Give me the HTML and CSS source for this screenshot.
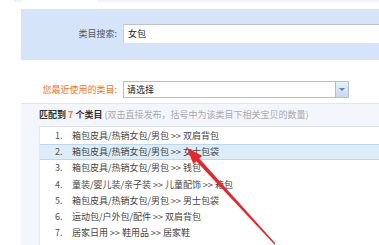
FILE: index.html
```html
<!DOCTYPE html>
<html>
<head>
<meta charset="utf-8">
<link rel="stylesheet" href="styles.css">
</head>
<body>
<div class="page">
  <div class="topstrip"><span class="ts-a"></span><span class="ts-b"></span></div>
  <div class="search-panel">
    <div class="row">
      <label class="label">类目搜索:</label>
      <div class="input">女包</div>
    </div>
  </div>
  <div class="recent">
    <label class="label orange">您最近使用的类目:</label>
    <div class="select"><span class="sel-text">请选择</span><span class="sel-btn"><span class="tri"></span></span></div>
  </div>
  <div class="results">
    <div class="res-head"><b>匹配到 <span class="num">7</span> 个类目</b> <span class="hint">(双击直接发布，括号中为该类目下相关宝贝的数量)</span></div>
    <ul class="list">
      <li><span class="no">1.</span>箱包皮具/热销女包/男包 &gt;&gt; 双肩背包</li>
      <li class="active"><span class="no">2.</span>箱包皮具/热销女包/男包 &gt;&gt; 女士包袋</li>
      <li><span class="no">3.</span>箱包皮具/热销女包/男包 &gt;&gt; 钱包</li>
      <li><span class="no">4.</span>童装/婴儿装/亲子装 &gt;&gt; 儿童配饰 &gt;&gt; 箱包</li>
      <li><span class="no">5.</span>箱包皮具/热销女包/男包 &gt;&gt; 男士包袋</li>
      <li><span class="no">6.</span>运动包/户外包/配件 &gt;&gt; 双肩背包</li>
      <li><span class="no">7.</span>居家日用 &gt;&gt; 鞋用品 &gt;&gt; 居家鞋</li>
    </ul>
  </div>
  <svg class="arrow" width="379" height="245" viewBox="0 0 379 245">
    <polygon points="187,148 202.2,155.7 199.3,158.4 275.5,243.5 274.5,244.5 196.3,161.2 193.4,163.9" fill="#e8262a"/>
  </svg>
</div>
</body>
</html>
```
FILE: styles.css
```css
html, body {
  margin: 0;
  padding: 0;
  background: #fff;
}
.page {
  position: relative;
  width: 379px;
  height: 245px;
  overflow: hidden;
  font-family: "Noto Sans CJK SC", "Noto Sans", sans-serif;
  font-size: 9px;
  color: #333;
}
.topstrip {
  height: 2px;
  display: flex;
}
.ts-a {
  margin-left: 14px;
  width: 7px;
  background: #eef3fb;
}
.ts-b {
  margin-left: 76px;
  flex: 1;
  background: #f1f5fb;
}
.search-panel {
  margin: 7px 0 0 21px;
  height: 51px;
  background: #d6e4f9;
  box-sizing: border-box;
  padding-top: 15px;
}
.row {
  display: flex;
  align-items: center;
}
.label {
  width: 96px;
  text-align: right;
  margin-right: 6px;
  color: #555;
  line-height: 19px;
}
.input {
  flex: 1;
  height: 19px;
  box-sizing: border-box;
  background: #fff;
  border-top: 1px solid #b9c2cf;
  border-left: 1px solid #c7cfd9;
  padding-left: 4px;
  line-height: 18px;
  color: #222;
}
.recent {
  display: flex;
  align-items: center;
  padding: 15px 0 0 21px;
  height: 43px;
  box-sizing: border-box;
}
.orange {
  color: #f0742a;
}
.select {
  width: 226px;
  height: 17px;
  box-sizing: border-box;
  border: 1px solid #a9c1de;
  background: #fff;
  display: flex;
  align-items: center;
}
.sel-text {
  flex: 1;
  padding-left: 3px;
  color: #222;
  line-height: 15px;
}
.sel-btn {
  width: 13px;
  height: 15px;
  box-sizing: border-box;
  border-left: 1px solid #a9c1de;
  background: linear-gradient(#e8eff8, #c9d8ea);
  display: flex;
  align-items: center;
  justify-content: center;
}
.tri {
  width: 0;
  height: 0;
  border-left: 3px solid transparent;
  border-right: 3px solid transparent;
  border-top: 3px solid #5b82b3;
}
.results {
  margin-left: 21px;
  height: 142px;
  background: #f3f6fc;
  border-top: 1px solid #dde7f4;
  box-sizing: border-box;
  padding: 3px 0 0 18px;
}
.res-head {
  height: 19px;
  line-height: 16px;
  color: #333;
}
.res-head b {
  font-weight: bold;
}
.num {
  color: #f0742a;
}
.hint {
  color: #aaa;
}
.list {
  list-style: none;
  margin: 0;
  padding: 1px 0 0 0;
  background: #fff;
  border-top: 1px solid #dbe4ef;
  border-left: 1px solid #e3eaf3;
  height: 130px;
}
.list li {
  height: 16.2px;
  line-height: 16.2px;
  padding-left: 15px;
  white-space: nowrap;
  color: #444;
  box-sizing: border-box;
}
.list li.active {
  background: #dcecf9;
  border-top: 1px solid #bcd8ef;
  border-bottom: 1px solid #bcd8ef;
  line-height: 14.2px;
}
.no {
  display: inline-block;
  width: 17px;
  color: #555;
}
.arrow {
  position: absolute;
  left: 0;
  top: 0;
  pointer-events: none;
}
```
